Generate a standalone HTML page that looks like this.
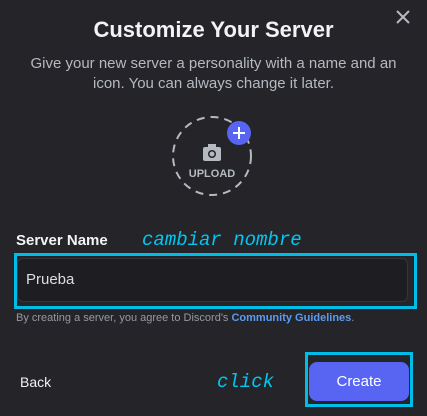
<!DOCTYPE html>
<html><head><style>
body{margin:0;width:427px;height:416px;background:#242429;font-family:"Liberation Sans",sans-serif;position:relative;overflow:hidden;color:#dbdee1}
.a{position:absolute}
</style></head><body>
<div class="a" style="left:0;top:17px;width:427px;text-align:center;font-size:22px;font-weight:bold;color:#f2f3f5">Customize Your Server</div>
<div class="a" style="left:28px;top:54px;width:371px;text-align:center;font-size:15px;line-height:20px;color:#b5bac1">Give your new server a personality with a name and an icon. You can always change it later.</div>
<svg class="a" style="left:160px;top:110px" width="110" height="100">
<circle cx="52" cy="46" r="39" fill="none" stroke="#b5bac1" stroke-width="2" stroke-dasharray="8 6"/>
<rect x="43" y="37" width="18" height="14" rx="2" fill="#b5bac1"/><rect x="48" y="34" width="8" height="4" fill="#b5bac1"/>
<circle cx="52" cy="44" r="4" fill="#242429"/><circle cx="52" cy="44" r="2.5" fill="#b5bac1"/>
<text x="52" y="67" text-anchor="middle" font-size="11" font-weight="bold" fill="#b5bac1" font-family="Liberation Sans">UPLOAD</text>
<circle cx="79" cy="23" r="12" fill="#5865f2"/><path d="M79 17v12M73 23h12" stroke="#fff" stroke-width="2"/>
</svg>
<svg class="a" style="left:395px;top:9px" width="16" height="16"><path d="M2 2L14 14M14 2L2 14" stroke="#b5bac1" stroke-width="2"/></svg>
<div class="a" style="left:16px;top:232px;font-size:15px;font-weight:bold;color:#f2f3f5">Server Name</div>
<div class="a" style="left:142px;top:229px;font-size:19px;font-style:italic;font-family:'Liberation Mono',monospace;color:#00c8f0">cambiar nombre</div>
<div class="a" style="left:14px;top:253px;width:397px;height:50px;border:3px solid #00bde8"></div>
<div class="a" style="left:17px;top:258px;width:389px;height:42px;border:1px solid #35353b;border-radius:6px;background:#1e1e22"></div>
<div class="a" style="left:26px;top:271px;font-size:15px;color:#dbdee1">Prueba</div>
<div class="a" style="left:16px;top:312px;font-size:11px;color:#949ba4">By creating a server, you agree to Discord's <b style="color:#5b9cf0">Community Guidelines</b>.</div>
<div class="a" style="left:20px;top:374px;font-size:14px;color:#f2f3f5">Back</div>
<div class="a" style="left:217px;top:371px;font-size:19px;font-style:italic;font-family:'Liberation Mono',monospace;color:#00c8f0">click</div>
<div class="a" style="left:305px;top:352px;width:102px;height:49px;border:3px solid #00bde8"></div>
<div class="a" style="left:309px;top:362px;width:100px;height:39px;border-radius:8px;background:#5865f2;color:#fff;font-size:15px;line-height:39px;text-align:center">Create</div>
</body></html>
